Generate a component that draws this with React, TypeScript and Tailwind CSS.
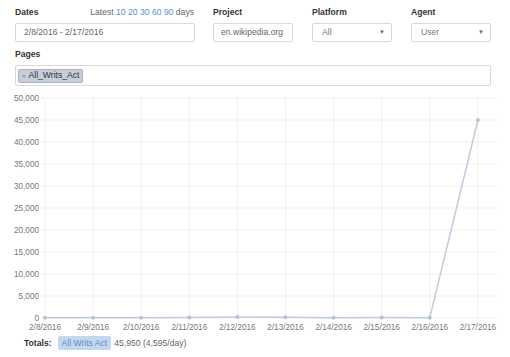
const dates = [
  "2/8/2016",
  "2/9/2016",
  "2/10/2016",
  "2/11/2016",
  "2/12/2016",
  "2/13/2016",
  "2/14/2016",
  "2/15/2016",
  "2/16/2016",
  "2/17/2016",
];
const values = [80, 60, 70, 90, 250, 180, 80, 90, 50, 45000];
const ticks = [0, 5000, 10000, 15000, 20000, 25000, 30000, 35000, 40000, 45000, 50000];

const X0 = 45;
const STEP = 48.1;
const Y0 = 228;
const H = 220;
const xAt = (i: number) => X0 + i * STEP;
const yAt = (v: number) => Y0 - (v / 50000) * H;

function Caret() {
  return <span className="text-[6px] text-[#666]">▼</span>;
}

function Chart() {
  const pts = values.map((v, i) => `${xAt(i)},${yAt(v)}`).join(" ");
  return (
    <svg width={510} height={245} className="block" style={{ fontFamily: '"Liberation Sans", Arial, sans-serif' }}>
      {ticks.map((t) => (
        <g key={t}>
          <line x1={X0} x2={497} y1={yAt(t)} y2={yAt(t)} stroke="#f1f1f1" strokeWidth={1} />
          <line x1={41} x2={X0} y1={yAt(t)} y2={yAt(t)} stroke="#e6e6e6" strokeWidth={1} />
          <text x={39} y={yAt(t) + 3} textAnchor="end" fontSize={8.2} fill="#777">
            {t.toLocaleString("en-US")}
          </text>
        </g>
      ))}
      {dates.map((d, i) => (
        <g key={d}>
          <line x1={xAt(i)} x2={xAt(i)} y1={yAt(50000)} y2={Y0} stroke="#f1f1f1" strokeWidth={1} />
          <text x={xAt(i)} y={240} textAnchor="middle" fontSize={8.2} fill="#777">
            {d}
          </text>
        </g>
      ))}
      <polyline points={pts} fill="none" stroke="#bfcddd" strokeWidth={1.5} />
      {values.map((v, i) => (
        <circle key={i} cx={xAt(i)} cy={yAt(v)} r={2} fill="#b8c3d0" />
      ))}
    </svg>
  );
}

export default function App() {
  return (
    <div
      className="w-[510px] h-[357px] bg-white overflow-hidden text-[8.6px] text-[#333]"
      style={{ fontFamily: '"Liberation Sans", Arial, sans-serif' }}
    >
      <div className="pl-[15px] pr-[19px] pt-[7px]">
        <div className="flex gap-[18px]">
          <div className="w-[180px]">
            <div className="flex h-[10px] items-center justify-between pr-px leading-[10px]">
              <span className="font-bold">Dates</span>
              <span className="text-[#666]">
                Latest{" "}
                <span className="text-[#5590c8]">10 20 30 60 90</span> days
              </span>
            </div>
            <div className="mt-[6px] flex h-[19px] items-center rounded-[2px] border border-[#dadada] px-[8px] text-[#666]">
              2/8/2016 - 2/17/2016
            </div>
          </div>
          <div className="w-[80px]">
            <div className="h-[10px] font-bold leading-[10px]">Project</div>
            <div className="mt-[6px] flex h-[19px] items-center rounded-[2px] border border-[#dadada] px-[7px] text-[#666]">
              en.wikipedia.org
            </div>
          </div>
          <div className="ml-px w-[80px]">
            <div className="h-[10px] font-bold leading-[10px]">Platform</div>
            <div className="mt-[6px] flex h-[19px] items-center justify-between rounded-[2px] border border-[#dadada] pl-[9px] pr-[6px] text-[#777]">
              <span>All</span>
              <Caret />
            </div>
          </div>
          <div className="ml-px w-[80px]">
            <div className="h-[10px] font-bold leading-[10px]">Agent</div>
            <div className="mt-[6px] flex h-[19px] items-center justify-between rounded-[2px] border border-[#dadada] pl-[9px] pr-[6px] text-[#777]">
              <span>User</span>
              <Caret />
            </div>
          </div>
        </div>

        <div className="mt-[7px] h-[10px] font-bold leading-[10px]">Pages</div>
        <div className="mt-[6px] flex h-[21px] items-center rounded-[2px] border border-[#dadada] px-[2px]">
          <span className="flex h-[14px] items-center gap-[3px] rounded-[2px] border border-[#aab3c0] bg-[#c6ceda] px-[3px] leading-none">
            <span className="text-[6px] text-[#777]">×</span>
            <span>All_Writs_Act</span>
          </span>
        </div>
      </div>

      <div className="mt-[4px]">
        <Chart />
      </div>

      <div className="flex h-[16px] items-center pl-[24px]">
        <span className="font-bold">Totals:</span>
        <span className="ml-[6px] rounded-[2px] bg-[#c3d7ee] px-[4px] py-[3px] leading-none text-[#5b8fc8]">
          All Writs Act
        </span>
        <span className="ml-[3px] text-[#666]">45,950 (4,595/day)</span>
      </div>
    </div>
  );
}
